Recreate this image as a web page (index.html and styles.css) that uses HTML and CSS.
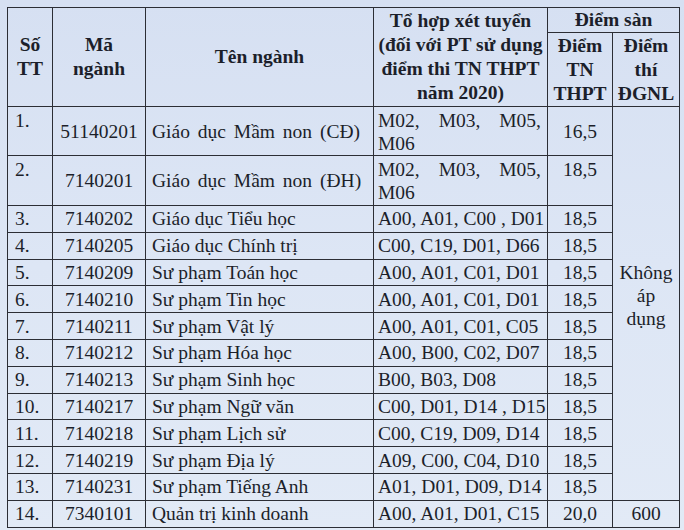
FILE: index.html
```html
<!DOCTYPE html>
<html lang="vi">
<head>
<meta charset="utf-8">
<link rel="stylesheet" href="styles.css">
</head>
<body>
<div class="sheet">
<table class="grid">
  <colgroup>
    <col class="c-stt"><col class="c-ma"><col class="c-ten"><col class="c-to"><col class="c-tn"><col class="c-dg">
  </colgroup>
  <thead>
    <tr class="h1">
      <th rowspan="2">Số<br>TT</th>
      <th rowspan="2">Mã<br>ngành</th>
      <th rowspan="2">Tên ngành</th>
      <th rowspan="2">Tổ hợp xét tuyển<br>(đối với PT sử dụng<br>điểm thi TN THPT<br>năm 2020)</th>
      <th colspan="2">Điểm sàn</th>
    </tr>
    <tr class="h2">
      <th>Điểm<br>TN<br>THPT</th>
      <th>Điểm<br>thí<br>ĐGNL</th>
    </tr>
  </thead>
  <tbody>
    <tr class="tall">
      <td class="stt top">1.</td><td class="ma">51140201</td><td class="ten wide">Giáo dục Mầm non (CĐ)</td>
      <td class="to just top">M02, M03, M05, M06</td><td class="diem">16,5</td>
      <td class="dg na" rowspan="13">Không<br>áp<br>dụng</td>
    </tr>
    <tr class="tall2">
      <td class="stt top">2.</td><td class="ma">7140201</td><td class="ten wide">Giáo dục Mầm non (ĐH)</td>
      <td class="to just top">M02, M03, M05, M06</td><td class="diem top">18,5</td>
    </tr>
    <tr><td class="stt">3.</td><td class="ma">7140202</td><td class="ten">Giáo dục Tiểu học</td><td class="to">A00, A01, C00 , D01</td><td class="diem">18,5</td></tr>
    <tr><td class="stt">4.</td><td class="ma">7140205</td><td class="ten">Giáo dục Chính trị</td><td class="to">C00, C19, D01, D66</td><td class="diem">18,5</td></tr>
    <tr><td class="stt">5.</td><td class="ma">7140209</td><td class="ten">Sư phạm Toán học</td><td class="to">A00, A01, C01, D01</td><td class="diem">18,5</td></tr>
    <tr><td class="stt">6.</td><td class="ma">7140210</td><td class="ten">Sư phạm Tin học</td><td class="to">A00, A01, C01, D01</td><td class="diem">18,5</td></tr>
    <tr><td class="stt">7.</td><td class="ma">7140211</td><td class="ten">Sư phạm Vật lý</td><td class="to">A00, A01, C01, C05</td><td class="diem">18,5</td></tr>
    <tr><td class="stt">8.</td><td class="ma">7140212</td><td class="ten">Sư phạm Hóa học</td><td class="to">A00, B00, C02, D07</td><td class="diem">18,5</td></tr>
    <tr><td class="stt">9.</td><td class="ma">7140213</td><td class="ten">Sư phạm Sinh học</td><td class="to">B00, B03, D08</td><td class="diem">18,5</td></tr>
    <tr><td class="stt">10.</td><td class="ma">7140217</td><td class="ten">Sư phạm Ngữ văn</td><td class="to">C00, D01, D14 , D15</td><td class="diem">18,5</td></tr>
    <tr><td class="stt">11.</td><td class="ma">7140218</td><td class="ten">Sư phạm Lịch sử</td><td class="to">C00, C19, D09, D14</td><td class="diem">18,5</td></tr>
    <tr><td class="stt">12.</td><td class="ma">7140219</td><td class="ten">Sư phạm Địa lý</td><td class="to">A09, C00, C04, D10</td><td class="diem">18,5</td></tr>
    <tr><td class="stt">13.</td><td class="ma">7140231</td><td class="ten">Sư phạm Tiếng Anh</td><td class="to">A01, D01, D09, D14</td><td class="diem">18,5</td></tr>
    <tr><td class="stt">14.</td><td class="ma">7340101</td><td class="ten">Quản trị kinh doanh</td><td class="to">A00, A01, D01, C15</td><td class="diem">20,0</td><td class="dg">600</td></tr>
  </tbody>
</table>
</div>
</body>
</html>
```
FILE: styles.css
```css
html, body {
  margin: 0;
  padding: 0;
}
body {
  width: 684px;
  height: 530px;
  overflow: hidden;
  background: linear-gradient(180deg, #d6e0f2 0%, #dde6f5 50%, #e2eaf6 100%);
  font-family: "Liberation Serif", "Times New Roman", serif;
  color: #1c1f2a;
}
.sheet {
  padding: 7px 0 0 7px;
}
.grid {
  border-collapse: collapse;
  table-layout: fixed;
  width: 672px;
  font-size: 19.5px;
  line-height: 23px;
}
.c-stt { width: 45px; }
.c-ma { width: 93px; }
.c-ten { width: 228px; }
.c-to { width: 174px; }
.c-tn { width: 65px; }
.c-dg { width: 67px; }

.grid th, .grid td {
  border: 1px solid #2c2e35;
  padding: 0;
}
.grid th {
  font-weight: bold;
  text-align: center;
  vertical-align: middle;
  line-height: 24px;
}
.h1 { height: 25px; }
.h2 { height: 74px; }

.grid td {
  vertical-align: middle;
  white-space: nowrap;
}
.grid tbody tr { height: 26.8px; }
.grid tbody tr.tall { height: 49px; }
.grid tbody tr.tall2 { height: 50px; }

.stt { padding-left: 7px !important; text-align: left; }
.ma { text-align: center; }
.ten { padding-left: 6px !important; text-align: left; }
.wide { word-spacing: 3px; }
.to { padding-left: 4px !important; text-align: left; }
.just {
  white-space: normal !important;
  text-align: justify;
  padding-right: 6px !important;
  text-align-last: left;
}
.diem { text-align: center; }
.dg { text-align: center; }
.na { line-height: 23px; padding-bottom: 16px !important; }
.top { vertical-align: top !important; padding-top: 2px !important; }
```
